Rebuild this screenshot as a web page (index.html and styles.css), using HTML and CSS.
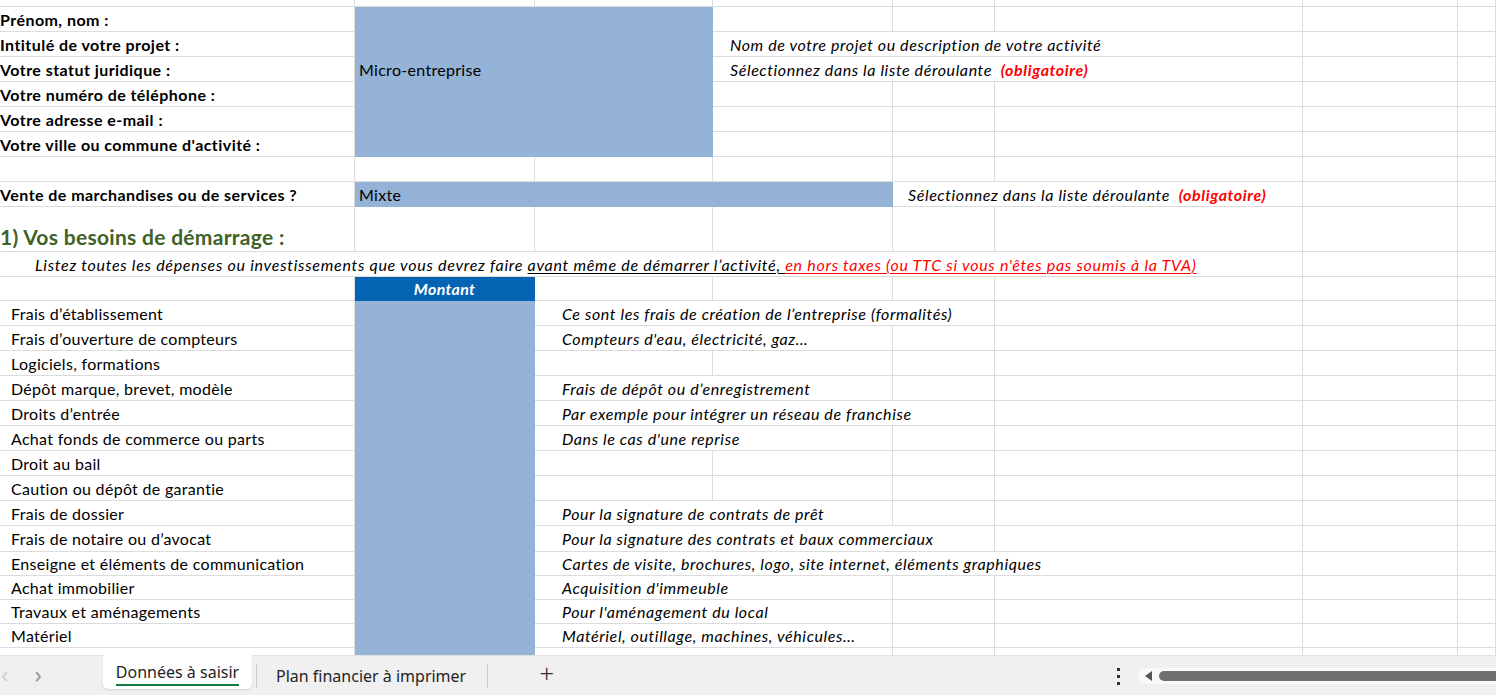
FILE: index.html
```html
<!DOCTYPE html>
<html lang="fr">
<head>
  <meta charset="UTF-8" />
  <title>Plan financier - Données à saisir</title>
  <link rel="stylesheet" href="styles.css">
</head>
<body>
  <div class="sheet">
    <div class="row r-top">
      <div class="c"></div><div class="c"></div><div class="c"></div><div class="c"></div><div class="c"></div><div class="c"></div><div class="c"></div><div class="c"></div>
    </div>

    <div class="row">
      <div class="c lbl">Prénom, nom :</div>
      <div class="c s2 blue"></div>
      <div class="c"></div><div class="c"></div><div class="c"></div><div class="c"></div><div class="c"></div>
    </div>
    <div class="row">
      <div class="c lbl">Intitulé de votre projet :</div>
      <div class="c s2 blue"></div>
      <div class="c s3 note">Nom de votre projet ou description de votre activité</div>
      <div class="c"></div><div class="c"></div>
    </div>
    <div class="row">
      <div class="c lbl">Votre statut juridique :</div>
      <div class="c s2 blue val">Micro-entreprise</div>
      <div class="c s3 note">Sélectionnez dans la liste déroulante &nbsp;<b class="req">(obligatoire)</b></div>
      <div class="c"></div><div class="c"></div>
    </div>
    <div class="row">
      <div class="c lbl">Votre numéro de téléphone :</div>
      <div class="c s2 blue"></div>
      <div class="c"></div><div class="c"></div><div class="c"></div><div class="c"></div><div class="c"></div>
    </div>
    <div class="row">
      <div class="c lbl">Votre adresse e-mail :</div>
      <div class="c s2 blue"></div>
      <div class="c"></div><div class="c"></div><div class="c"></div><div class="c"></div><div class="c"></div>
    </div>
    <div class="row">
      <div class="c lbl">Votre ville ou commune d'activité :</div>
      <div class="c s2 blue"></div>
      <div class="c"></div><div class="c"></div><div class="c"></div><div class="c"></div><div class="c"></div>
    </div>
    <div class="row">
      <div class="c"></div><div class="c"></div><div class="c"></div><div class="c"></div><div class="c"></div><div class="c"></div><div class="c"></div><div class="c"></div>
    </div>
    <div class="row">
      <div class="c lbl">Vente de marchandises ou de services ?</div>
      <div class="c s3 blue val">Mixte</div>
      <div class="c s2 note2">Sélectionnez dans la liste déroulante &nbsp;<b class="req">(obligatoire)</b></div>
      <div class="c"></div><div class="c"></div>
    </div>

    <div class="row r-title">
      <div class="c title">1) Vos besoins de démarrage :</div>
      <div class="c"></div><div class="c"></div><div class="c"></div><div class="c"></div><div class="c"></div><div class="c"></div><div class="c"></div>
    </div>
    <div class="row">
      <div class="c s6 intro">Listez toutes les dépenses ou investissements que vous devrez faire&nbsp; <u>avant même de démarrer l’activité,&nbsp;</u> <u class="red">en hors taxes (ou TTC si vous n'êtes pas soumis à la TVA)</u></div>
      <div class="c"></div><div class="c"></div>
    </div>
    <div class="row r-head">
      <div class="c"></div>
      <div class="c head">Montant</div>
      <div class="c"></div><div class="c"></div><div class="c"></div><div class="c"></div><div class="c"></div><div class="c"></div>
    </div>

    <div class="row">
      <div class="c item">Frais d’établissement</div><div class="c blue"></div>
      <div class="c s3 desc">Ce sont les frais de création de l’entreprise (formalités)</div>
      <div class="c"></div><div class="c"></div><div class="c"></div>
    </div>
    <div class="row">
      <div class="c item">Frais d’ouverture de compteurs</div><div class="c blue"></div>
      <div class="c s2 desc">Compteurs d'eau, électricité, gaz…</div>
      <div class="c"></div><div class="c"></div><div class="c"></div><div class="c"></div>
    </div>
    <div class="row">
      <div class="c item">Logiciels, formations</div><div class="c blue"></div>
      <div class="c"></div><div class="c"></div><div class="c"></div><div class="c"></div><div class="c"></div><div class="c"></div>
    </div>
    <div class="row">
      <div class="c item">Dépôt marque, brevet, modèle</div><div class="c blue"></div>
      <div class="c s2 desc">Frais de dépôt ou d’enregistrement</div>
      <div class="c"></div><div class="c"></div><div class="c"></div><div class="c"></div>
    </div>
    <div class="row">
      <div class="c item">Droits d’entrée</div><div class="c blue"></div>
      <div class="c s3 desc">Par exemple pour intégrer un réseau de franchise</div>
      <div class="c"></div><div class="c"></div><div class="c"></div>
    </div>
    <div class="row">
      <div class="c item">Achat fonds de commerce ou parts</div><div class="c blue"></div>
      <div class="c s2 desc">Dans le cas d'une reprise</div>
      <div class="c"></div><div class="c"></div><div class="c"></div><div class="c"></div>
    </div>
    <div class="row">
      <div class="c item">Droit au bail</div><div class="c blue"></div>
      <div class="c"></div><div class="c"></div><div class="c"></div><div class="c"></div><div class="c"></div><div class="c"></div>
    </div>
    <div class="row">
      <div class="c item">Caution ou dépôt de garantie</div><div class="c blue"></div>
      <div class="c"></div><div class="c"></div><div class="c"></div><div class="c"></div><div class="c"></div><div class="c"></div>
    </div>
    <div class="row">
      <div class="c item">Frais de dossier</div><div class="c blue"></div>
      <div class="c s2 desc">Pour la signature de contrats de prêt</div>
      <div class="c"></div><div class="c"></div><div class="c"></div><div class="c"></div>
    </div>
    <div class="row r-26">
      <div class="c item">Frais de notaire ou d’avocat</div><div class="c blue"></div>
      <div class="c s3 desc">Pour la signature des contrats et baux commerciaux</div>
      <div class="c"></div><div class="c"></div><div class="c"></div>
    </div>
    <div class="row r-24">
      <div class="c item">Enseigne et éléments de communication</div><div class="c blue"></div>
      <div class="c s4 desc">Cartes de visite, brochures, logo, site internet, éléments graphiques</div>
      <div class="c"></div><div class="c"></div>
    </div>
    <div class="row r-24">
      <div class="c item">Achat immobilier</div><div class="c blue"></div>
      <div class="c s2 desc">Acquisition d'immeuble</div>
      <div class="c"></div><div class="c"></div><div class="c"></div><div class="c"></div>
    </div>
    <div class="row r-24">
      <div class="c item">Travaux et aménagements</div><div class="c blue"></div>
      <div class="c s2 desc">Pour l'aménagement du local</div>
      <div class="c"></div><div class="c"></div><div class="c"></div><div class="c"></div>
    </div>
    <div class="row r-24">
      <div class="c item">Matériel</div><div class="c blue"></div>
      <div class="c s2 desc">Matériel, outillage, machines, véhicules…</div>
      <div class="c"></div><div class="c"></div><div class="c"></div><div class="c"></div>
    </div>
    <div class="row r-24">
      <div class="c item">Matériel informatique</div><div class="c blue"></div>
      <div class="c s2 desc">Ordinateurs, imprimantes, logiciels…</div>
      <div class="c"></div><div class="c"></div><div class="c"></div><div class="c"></div>
    </div>
  </div>

  <div class="tabbar">
    <div class="nav">
      <span class="arrow off">&lsaquo;</span>
      <span class="arrow">&rsaquo;</span>
    </div>
    <div class="tab active"><span>Données à saisir</span></div>
    <div class="sep"></div>
    <div class="tab">Plan financier à imprimer</div>
    <div class="sep"></div>
    <div class="add">+</div>
    <div class="spacer"></div>
    <div class="more"><i></i><i></i><i></i></div>
    <div class="hscroll">
      <span class="tri"></span>
      <span class="thumb"></span>
    </div>
  </div>
</body>
</html>
```

FILE: styles.css
```css
html, body {
  margin: 0;
  padding: 0;
  background: #fff;
  overflow: hidden;
}
body {
  width: 1496px;
  height: 695px;
  font-family: Lato, "Liberation Sans", Arial, sans-serif;
  color: #000;
  font-size: 16px;
  letter-spacing: 0.3px;
}
.sheet {
  height: 655px;
  overflow: hidden;
}
.row {
  display: grid;
  grid-template-columns: 355px 180px 178px 180px 102px 308px 155px 1fr;
  height: 25px;
}
.r-top { height: 7px; }
.r-title { height: 45px; }
.r-head { height: 24px; }
.r-26 { height: 26px; }
.r-24 { height: 24px; }
.c {
  box-sizing: border-box;
  border-right: 1px solid #dcdcdc;
  border-bottom: 1px solid #dcdcdc;
  display: flex;
  align-items: center;
  white-space: nowrap;
  overflow: hidden;
  min-width: 0;
}
.s2 { grid-column: span 2; }
.s3 { grid-column: span 3; }
.s4 { grid-column: span 4; }
.s6 { grid-column: span 6; }
.blue {
  background: #95b3d7;
  border-color: #95b3d7;
}
.lbl {
  font-weight: bold;
  letter-spacing: 0.45px;
}
.val { padding-left: 4px; }
.note, .note2, .desc, .intro {
  font-style: italic;
  letter-spacing: 0.6px;
}
.note { padding-left: 17px; }
.note2 { padding-left: 15px; }
.req {
  color: #ff0000;
  font-weight: bold;
}
.title {
  align-items: flex-end;
  padding-bottom: 2px;
  font-size: 21px;
  font-weight: bold;
  letter-spacing: 0.3px;
  color: #3f6229;
}
.intro {
  padding-left: 35px;
  letter-spacing: 0.72px;
}
.intro u { text-decoration-thickness: 1px; text-underline-offset: 2px; }
.red { color: #ff0000; }
.head {
  background: #0563b4;
  border-color: #0563b4;
  color: #fff;
  font-weight: bold;
  font-style: italic;
  justify-content: center;
}
.item { padding-left: 11px; }
.desc { padding-left: 27px; }

/* barre des onglets */
.tabbar {
  height: 40px;
  background: #f0f0f0;
  border-top: 1px solid #e2e2e2;
  box-sizing: border-box;
  display: flex;
  align-items: flex-start;
  font-family: "Noto Sans", "Open Sans", sans-serif;
  letter-spacing: 0;
  color: #242424;
}
.nav {
  width: 103px;
  height: 38px;
  display: flex;
  align-items: center;
  gap: 26px;
  box-sizing: border-box;
}
.arrow {
  font-size: 24px;
  color: #9a9a9a;
  line-height: 1;
  margin-top: -3px;
}
.arrow.off { color: #d0d0d0; margin-left: 1px; }
.tab {
  height: 33px;
  padding: 0 17px 0 19px;
  display: flex;
  align-items: center;
  font-size: 16px;
  margin-top: 3px;
}
.tab.active {
  background: #fff;
  margin-top: -1px;
  height: 34px;
  padding: 0 10px;
  border-radius: 0 0 5px 5px;
  box-shadow: 0 1px 2px #0000001f;
  width: 149px;
  box-sizing: border-box;
  justify-content: center;
}
.tab.active span {
  border-bottom: 2px solid #107c41;
  padding-bottom: 1px;
  margin-top: 3px;
}
.sep {
  width: 1px;
  height: 24px;
  background: #c9c9c9;
  margin: 8px 0 0 4px;
}
.add {
  font-size: 26px;
  font-weight: 300;
  line-height: 1;
  margin: 4px 0 0 51px;
  color: #333;
}
.spacer { flex: 1; }
.more {
  display: flex;
  flex-direction: column;
  gap: 4px;
  margin: 12px 18px 0 0;
}
.more i {
  width: 3px;
  height: 3px;
  background: #333;
  display: block;
}
.hscroll {
  width: 358px;
  height: 16px;
  margin-top: 12px;
  background: #f8f8f8;
  border-radius: 8px 0 0 8px;
  display: flex;
  align-items: center;
}
.tri {
  width: 0;
  height: 0;
  border-top: 5px solid transparent;
  border-bottom: 5px solid transparent;
  border-right: 7px solid #555;
  margin-left: 7px;
}
.thumb {
  flex: 1;
  height: 10px;
  background: #707070;
  border-radius: 5px 0 0 5px;
  margin-left: 7px;
}
```
